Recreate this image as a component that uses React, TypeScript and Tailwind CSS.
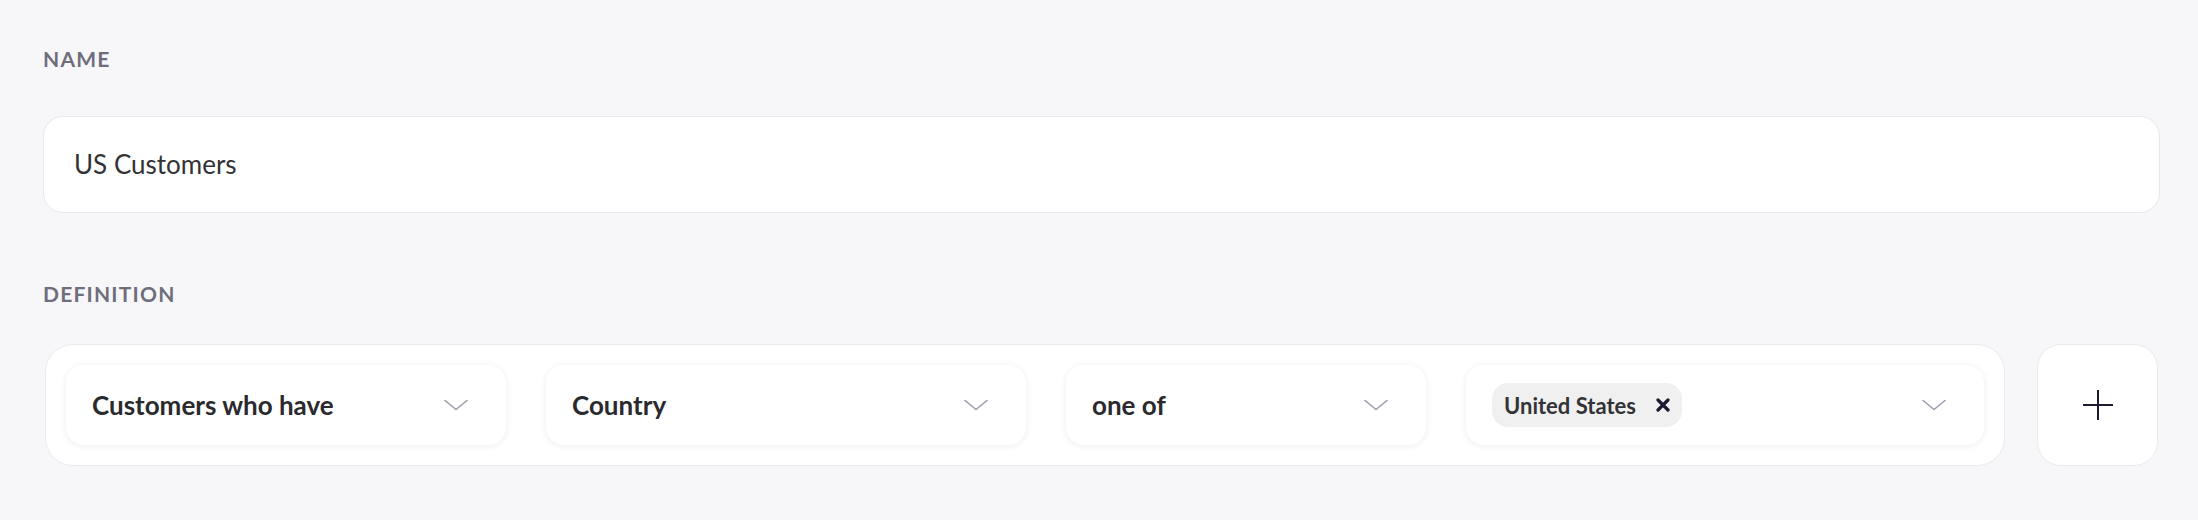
import type { ReactNode } from "react";

const Chevron = () => (
  <svg width="24" height="12" viewBox="0 0 24 12" fill="none" className="shrink-0">
    <path d="M1 1.5 L12 10.5 L23 1.5" stroke="#9d9cae" strokeWidth="1.6" strokeLinecap="round" strokeLinejoin="round" />
  </svg>
);

function Select({ className, children }: { className: string; children: ReactNode }) {
  return (
    <div
      className={`flex h-[80px] items-center justify-between rounded-[18px] bg-white pl-[26px] pr-[38px] shadow-[0_1px_7px_rgba(20,20,40,0.08)] ${className}`}
    >
      {children}
      <Chevron />
    </div>
  );
}

export default function App() {
  return (
    <div
      className="min-h-screen bg-[#f7f7f9] pl-[43px] pr-[38px] pt-[44px]"
      style={{ fontFamily: "Lato, 'Noto Sans', sans-serif" }}
    >
      <p className="text-[21px] leading-[30px] font-bold uppercase tracking-[1.2px] text-[#6f6e7d]">Name</p>

      <div className="mt-[42px] flex h-[97px] items-center rounded-[20px] border border-[#e8e8ec] bg-white pl-[30px]">
        <span className="text-[26px] text-[#333336]">US Customers</span>
      </div>

      <p className="mt-[66px] text-[21px] leading-[30px] font-bold uppercase tracking-[1.2px] text-[#6f6e7d]">
        Definition
      </p>

      <div className="mt-[35px] flex gap-[32px] px-[2px]">
        <div className="flex flex-1 gap-[40px] rounded-[28px] border border-[#ebebee] bg-white p-[20px]">
          <Select className="w-[440px]">
            <span className="text-[26px] font-bold text-[#2a2a2e]">Customers who have</span>
          </Select>
          <Select className="w-[480px]">
            <span className="text-[26px] font-bold text-[#2a2a2e]">Country</span>
          </Select>
          <Select className="w-[360px]">
            <span className="text-[26px] font-bold text-[#2a2a2e]">one of</span>
          </Select>
          <Select className="flex-1">
            <span className="flex h-[44px] items-center gap-[20px] rounded-[16px] bg-[#f0f0f1] px-[12px]">
              <span className="text-[22px] font-bold text-[#333336]">United States</span>
              <svg width="14" height="14" viewBox="0 0 14 14" fill="none">
                <path d="M2 2 L12 12 M12 2 L2 12" stroke="#1c1a2e" strokeWidth="3.2" strokeLinecap="round" />
              </svg>
            </span>
          </Select>
        </div>

        <button className="flex h-[122px] w-[121px] items-center justify-center rounded-[24px] border border-[#ebebee] bg-white">
          <svg width="30" height="30" viewBox="0 0 30 30" fill="none">
            <path d="M15 0 V30 M0 15 H30" stroke="#1c1a2e" strokeWidth="2" />
          </svg>
        </button>
      </div>
    </div>
  );
}
